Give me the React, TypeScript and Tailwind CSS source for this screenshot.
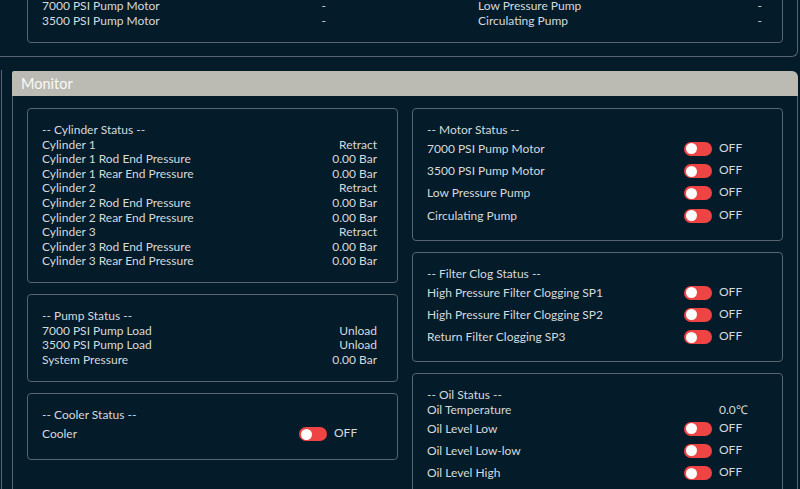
import React from 'react';

interface Row {
  label: string;
  value?: string;
  toggle?: boolean;
}

interface Section {
  title: string;
  rows: Row[];
}

const cylinder: Section = {
  title: '-- Cylinder Status --',
  rows: [
    { label: 'Cylinder 1', value: 'Retract' },
    { label: 'Cylinder 1 Rod End Pressure', value: '0.00 Bar' },
    { label: 'Cylinder 1 Rear End Pressure', value: '0.00 Bar' },
    { label: 'Cylinder 2', value: 'Retract' },
    { label: 'Cylinder 2 Rod End Pressure', value: '0.00 Bar' },
    { label: 'Cylinder 2 Rear End Pressure', value: '0.00 Bar' },
    { label: 'Cylinder 3', value: 'Retract' },
    { label: 'Cylinder 3 Rod End Pressure', value: '0.00 Bar' },
    { label: 'Cylinder 3 Rear End Pressure', value: '0.00 Bar' },
  ],
};

const pump: Section = {
  title: '-- Pump Status --',
  rows: [
    { label: '7000 PSI Pump Load', value: 'Unload' },
    { label: '3500 PSI Pump Load', value: 'Unload' },
    { label: 'System Pressure', value: '0.00 Bar' },
  ],
};

const cooler: Section = {
  title: '-- Cooler Status --',
  rows: [{ label: 'Cooler', toggle: true }],
};

const motor: Section = {
  title: '-- Motor Status --',
  rows: [
    { label: '7000 PSI Pump Motor', toggle: true },
    { label: '3500 PSI Pump Motor', toggle: true },
    { label: 'Low Pressure Pump', toggle: true },
    { label: 'Circulating Pump', toggle: true },
  ],
};

const filter: Section = {
  title: '-- Filter Clog Status --',
  rows: [
    { label: 'High Pressure Filter Clogging SP1', toggle: true },
    { label: 'High Pressure Filter Clogging SP2', toggle: true },
    { label: 'Return Filter Clogging SP3', toggle: true },
  ],
};

const oil: Section = {
  title: '-- Oil Status --',
  rows: [
    { label: 'Oil Temperature', value: '0.0℃' },
    { label: 'Oil Level Low', toggle: true },
    { label: 'Oil Level Low-low', toggle: true },
    { label: 'Oil Level High', toggle: true },
  ],
};

function Toggle() {
  return (
    <div className="flex items-center gap-[7px]">
      <div className="flex h-[14px] w-[28px] items-center rounded-full bg-[#ef4444] pl-[2px]">
        <div className="h-[11px] w-[11px] rounded-full bg-white" />
      </div>
      <span className="mb-[2px]">OFF</span>
    </div>
  );
}

function StatusBox({ section, oilTemp, loose }: { section: Section; oilTemp?: boolean; loose?: boolean }) {
  return (
    <div
      className={`rounded-[4px] border border-[#56656f] pt-[14px] pl-[14px] pr-[20px] ${
        loose ? 'pb-[14px]' : 'pb-[13px]'
      }`}
    >
      <div className="leading-[14.6px]">{section.title}</div>
      {section.rows.map((row) =>
        row.toggle ? (
          <div key={row.label} className="flex h-[22.3px] items-center">
            <span className="w-[257px]">{row.label}</span>
            <Toggle />
          </div>
        ) : oilTemp ? (
          <div key={row.label} className="flex leading-[14.6px]">
            <span className="w-[292px]">{row.label}</span>
            <span>{row.value}</span>
          </div>
        ) : (
          <div key={row.label} className="flex justify-between leading-[14.6px]">
            <span>{row.label}</span>
            <span>{row.value}</span>
          </div>
        )
      )}
    </div>
  );
}

export default function App() {
  return (
    <div className="h-[489px] w-[800px] overflow-hidden bg-[#041b29] font-['Lato',sans-serif] text-[12px] text-[#d5dadd]">
      {/* pump overview, cut off at the top */}
      <div className="h-[57px] w-[798px] overflow-hidden rounded-br-[6px] border-r border-b border-[#56656f] pl-[27px] pr-[14px]">
        <div className="-mt-[13px] rounded-[4px] border border-[#56656f] pt-[10px] pb-[14px] pl-[14px] pr-[20px]">
          <div className="grid grid-cols-[284px_284px] justify-between leading-[15px]">
            <div className="flex justify-between">
              <span>7000 PSI Pump Motor</span>
              <span>-</span>
            </div>
            <div className="flex justify-between">
              <span>Low Pressure Pump</span>
              <span>-</span>
            </div>
            <div className="flex justify-between">
              <span>3500 PSI Pump Motor</span>
              <span>-</span>
            </div>
            <div className="flex justify-between">
              <span>Circulating Pump</span>
              <span>-</span>
            </div>
          </div>
        </div>
      </div>

      <div className="ml-[1px] mt-[13px] border-l border-[#56656f] pl-[10px] pt-[1px]">
        <div className="w-[786px]">
          <div className="flex h-[25px] items-center rounded-tl-[2px] rounded-tr-[6px] bg-[#bcbbb3] pl-[9px] text-[14.5px] text-[#f9f9f7]">
            Monitor
          </div>
          <div className="grid h-[420px] grid-cols-2 gap-[14px] border-x border-[#56656f] px-[14px] pt-[12px]">
            <div className="flex flex-col gap-[11px]">
              <StatusBox section={cylinder} />
              <StatusBox section={pump} loose />
              <StatusBox section={cooler} loose />
            </div>
            <div className="flex flex-col gap-[11px]">
              <StatusBox section={motor} />
              <StatusBox section={filter} />
              <StatusBox section={oil} oilTemp />
            </div>
          </div>
        </div>
      </div>
    </div>
  );
}
